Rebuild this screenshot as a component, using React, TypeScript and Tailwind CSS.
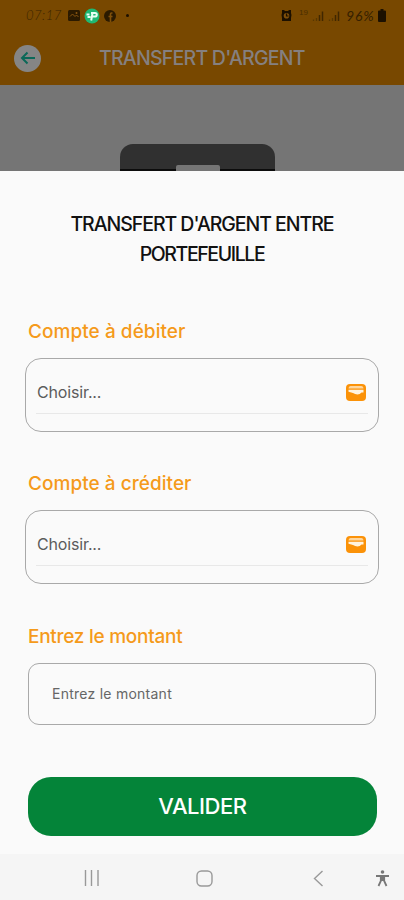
import React from "react";

function StatusBar() {
  return (
    <div className="h-[31px] flex justify-between text-[#2b1a00]">
      <div className="flex items-center pl-[26px]">
        <span className="w-[42px] font-['Lato'] italic font-light text-[13px] tracking-[0.500px] text-[#3a2400]">
          07:17
        </span>
        <svg width="12" height="11" viewBox="0 0 12 11">
          <rect width="12" height="11" rx="1.5" fill="#2b1a00" />
          <path d="M2 6.5L4.5 4l2.5 2.5L8.500 5 10.500 7" fill="none" stroke="#8a5610" strokeWidth="1" />
          <circle cx="8.500" cy="3" r="1" fill="#8a5610" />
        </svg>
        <svg className="ml-[4px]" width="16" height="16" viewBox="0 0 16 16">
          <circle cx="8" cy="8" r="7.500" fill="#1fb872" />
          <path
            d="M2.500 6.500h3M3.500 9h3M7 5h4a1.800 1.800 0 0 1 0 3.600H8.500M8.500 5L7.200 12.500"
            fill="none"
            stroke="#e8fff4"
            strokeWidth="2"
          />
        </svg>
        <svg className="ml-[4px]" width="12" height="12" viewBox="0 0 12 12">
          <circle cx="6" cy="6" r="6" fill="#2b1a00" />
          <path d="M8.500 3H7.500Q6.500 3 6.500 4v8M4.500 6.500h4" fill="none" stroke="#80500a" strokeWidth="1.600" />
        </svg>
        <span className="ml-[10px] h-[3px] w-[3px] rounded-full bg-[#1c1000]"></span>
      </div>
      <div className="flex items-center pr-[18px]">
        <svg width="11" height="11" viewBox="0 0 11 11">
          <path d="M1 0h2l1 1h3l1-1h2v3l.5 2-.5 3v3H1V8L.5 5 1 3z" fill="#1c1000" />
          <circle cx="5.500" cy="5.800" r="2.800" fill="#80500a" />
          <path d="M5.500 3.500v2.500h2" fill="none" stroke="#1c1000" strokeWidth="1.200" />
        </svg>
        <span className="ml-[7px] w-[13px] -mt-[5px] font-['Liberation_Sans'] text-[8px] text-[#4a2e00]">
          19
        </span>
        <SignalIcon />
        <SignalIcon />
        <span className="ml-[2px] w-[32px] whitespace-nowrap font-['Lato'] italic text-[14px] tracking-[0.800px] text-[#352000]">
          96%
        </span>
        <svg width="8" height="13" viewBox="0 0 8 13">
          <path d="M2.500 0h3v1.500H7q1 0 1 1V12q0 1-1 1H1q-1 0-1-1V2.500q0-1 1-1h1.500z" fill="#1c1000" />
        </svg>
      </div>
    </div>
  );
}

function SignalIcon() {
  return (
    <svg className="mr-[3px]" width="13" height="11" viewBox="0 0 13 11">
      <path d="M1.500 11V9.500M4.500 11V8" stroke="#583700" strokeWidth="1.300" />
      <path d="M7.500 11V5M10.500 11V1.500" stroke="#402700" strokeWidth="1.500" />
    </svg>
  );
}

function WalletIcon() {
  return (
    <svg width="20" height="17" viewBox="0 0 20 17">
      <rect width="20" height="17" rx="4" fill="#fb9208" />
      <path d="M2.500 4.500Q2.500 2 4.500 2h11q2 0 2 2.500z" fill="#ffd69c" />
      <path d="M2.500 5.800h15v2.700h-2q-1.500 1.900-4 1.900-2.500 0-4.500-1.400L2.500 7.700z" fill="#fff3df" />
    </svg>
  );
}

function SelectBox() {
  return (
    <div className="mx-[25px] h-[74px] rounded-[16px] border border-[#a9a9a9] px-[10px] pt-[15px]">
      <div className="flex h-[40px] items-center justify-between border-b border-[#e8e8e8] pb-[3px] pl-px pr-[2px]">
        <span className="text-[16px] tracking-[-0.150px] text-[#5c5c5c]">Choisir...</span>
        <WalletIcon />
      </div>
    </div>
  );
}

function App() {
  return (
    <div className="flex h-[900px] w-[404px] flex-col overflow-hidden bg-[#fafafa] font-['Inter',sans-serif]">
      {/* dimmed page */}
      <div className="h-[85px] shrink-0 bg-[#784800]">
        <StatusBar />
        <div className="flex h-[54px] items-center pl-[14px]">
          <div className="flex h-[27px] w-[27px] items-center justify-center rounded-full bg-[#858585]">
            <svg width="16" height="14" viewBox="0 0 16 14">
              <path d="M15 7H2M7.500 1.500L2 7l5.500 5.500" fill="none" stroke="#0b6858" strokeWidth="2" />
            </svg>
          </div>
          <h1 className="ml-[58px] whitespace-nowrap pt-[2px] text-[19.5px] font-medium tracking-[-0.750px] text-[#858080]">
            TRANSFERT D'ARGENT
          </h1>
        </div>
      </div>
      <div className="h-[86px] shrink-0 bg-[#757575] pt-[59px]">
        <div className="ml-[120px] flex h-[27px] w-[155px] items-end justify-center rounded-t-[13px] border-b-2 border-[#0c0c0c] bg-[#303030]">
          <div className="-mb-[2px] h-[6px] w-[44px] rounded-t-[2px] bg-[#757575]"></div>
        </div>
      </div>

      {/* bottom sheet */}
      <div className="h-[683px] shrink-0 pt-[38px]">
        <h2 className="h-[60px] text-center text-[19.5px] font-medium leading-[30px] tracking-[-1.040px] text-[#111111]">
          TRANSFERT D'ARGENT ENTRE
          <br />
          <span className="tracking-[-1.400px]">PORTEFEUILLE</span>
        </h2>

        <h3 className="ml-[28px] mt-[49px] h-[40px] text-[19px] font-medium leading-[28px] tracking-[0.050px] text-[#f59a1b]">
          Compte à débiter
        </h3>
        <SelectBox />

        <h3 className="ml-[28px] mt-[38px] h-[40px] text-[19px] font-medium leading-[28px] tracking-[0.040px] text-[#f59a1b]">
          Compte à créditer
        </h3>
        <SelectBox />

        <h3 className="ml-[28px] mt-[38px] h-[41px] text-[19px] font-medium leading-[29px] tracking-[-0.270px] text-[#f59a1b]">
          Entrez le montant
        </h3>
        <div className="mx-[28px] flex h-[62px] items-center rounded-[11px] border border-[#a9a9a9] pb-[2px] pl-[23px]">
          <span className="text-[14px] tracking-[0.250px] text-[#666666]">Entrez le montant</span>
        </div>

        <button className="mx-[28px] mt-[52px] flex h-[59px] w-[349px] items-center justify-center rounded-[23px] bg-[#048439] text-[22px] font-medium tracking-[-0.450px] text-white">
          VALIDER
        </button>
      </div>

      {/* android nav bar */}
      <div className="flex h-[46px] shrink-0 items-center bg-[#f5f5f5] pb-px pt-[3px]">
        <svg className="ml-[84px]" width="16" height="16" viewBox="0 0 16 16">
          <path d="M1.500 0v16M7.500 0v16M14 0v16" stroke="#999999" strokeWidth="1.400" />
        </svg>
        <svg className="ml-[96px]" width="17" height="17" viewBox="0 0 17 17">
          <rect x="1" y="1" width="15" height="15" rx="4.500" fill="none" stroke="#999999" strokeWidth="1.400" />
        </svg>
        <svg className="ml-[100px]" width="12" height="17" viewBox="0 0 12 17">
          <path d="M9.500 1L1.500 8.500l8 7.500" fill="none" stroke="#999999" strokeWidth="1.400" />
        </svg>
        <svg className="ml-[50px]" width="15" height="17" viewBox="0 0 15 17">
          <circle cx="7.500" cy="2" r="1.800" fill="#777777" />
          <path d="M1 6h13M7.500 5v6M5.800 6v5L3.500 16M9.200 6v5l2.300 5" fill="none" stroke="#777777" strokeWidth="1.800" />
        </svg>
      </div>
    </div>
  );
}

export default App;
